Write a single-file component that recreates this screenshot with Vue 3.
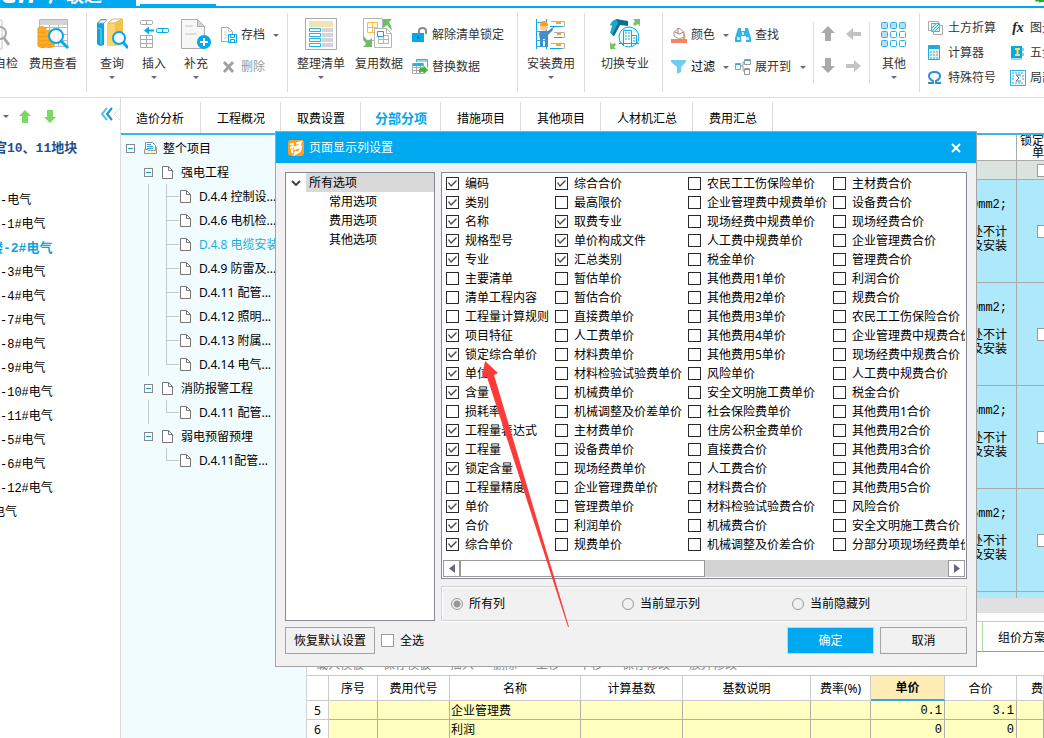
<script setup>
import { ref, reactive } from 'vue'

const tabs = ['造价分析', '工程概况', '取费设置', '分部分项', '措施项目', '其他项目', '人材机汇总', '费用汇总']
const activeTab = ref('分部分项')

const units = [
  '-电气', '-1#电气', '楼-2#电气', '-3#电气', '-4#电气', '-7#电气', '-8#电气', '-9#电气',
  '-10#电气', '-11#电气', '-5#电气', '-6#电气', '-12#电气', '电气',
]
const activeUnit = '楼-2#电气'

const tree = [
  {
    name: '强电工程',
    items: ['D.4.4 控制设...', 'D.4.6 电机检...', 'D.4.8 电缆安装', 'D.4.9 防雷及...', 'D.4.11 配管...', 'D.4.12 照明...', 'D.4.13 附属...', 'D.4.14 电气...'],
  },
  { name: '消防报警工程', items: ['D.4.11 配管...'] },
  { name: '弱电预留预埋', items: ['D.4.11配管...'] },
]
const activeItem = 'D.4.8 电缆安装'

const gridRows = ['0mm2;', '0mm2;', '5mm2;', '5mm2;']

const on = (label) => ({ label, checked: true })
const off = (label) => ({ label, checked: false })
const columns = reactive([
  [
    on('编码'), on('类别'), on('名称'), on('规格型号'), on('专业'), off('主要清单'), off('清单工程内容'),
    off('工程量计算规则'), on('项目特征'), on('锁定综合单价'), on('单位'), on('含量'), off('损耗率'),
    on('工程量表达式'), on('工程量'), on('锁定含量'), off('工程量精度'), on('单价'), on('合价'), on('综合单价'),
  ],
  [
    on('综合合价'), off('最高限价'), on('取费专业'), on('单价构成文件'), on('汇总类别'), off('暂估单价'),
    off('暂估合价'), off('直接费单价'), off('人工费单价'), off('材料费单价'), off('材料检验试验费单价'),
    off('机械费单价'), off('机械调整及价差单价'), off('主材费单价'), off('设备费单价'), off('现场经费单价'),
    off('企业管理费单价'), off('管理费单价'), off('利润单价'), off('规费单价'),
  ],
  [
    off('农民工工伤保险单价'), off('企业管理费中规费单价'), off('现场经费中规费单价'), off('人工费中规费单价'),
    off('税金单价'), off('其他费用1单价'), off('其他费用2单价'), off('其他费用3单价'), off('其他费用4单价'),
    off('其他费用5单价'), off('风险单价'), off('安全文明施工费单价'), off('社会保险费单价'), off('住房公积金费单价'),
    off('直接费合价'), off('人工费合价'), off('材料费合价'), off('材料检验试验费合价'), off('机械费合价'),
    off('机械调整及价差合价'),
  ],
  [
    off('主材费合价'), off('设备费合价'), off('现场经费合价'), off('企业管理费合价'), off('管理费合价'),
    off('利润合价'), off('规费合价'), off('农民工工伤保险合价'), off('企业管理费中规费合价'),
    off('现场经费中规费合价'), off('人工费中规费合价'), off('税金合价'), off('其他费用1合价'), off('其他费用2合价'),
    off('其他费用3合价'), off('其他费用4合价'), off('其他费用5合价'), off('风险合价'), off('安全文明施工费合价'),
    off('分部分项现场经费单价'),
  ],
])
const scope = ref('所有列')
const allChecked = ref(false)

const feeActions = ['载入模板', '保存模板', '插入', '删除', '上移', '下移', '保存修改', '放弃修改']
const feeRows = [
  { no: 5, name: '企业管理费', price: '0.1', total: '3.1' },
  { no: 6, name: '利润', price: '0', total: '0' },
]
</script>

<template>
  <div class="app">
    <header class="titlebar">
      <div class="brand"><i>GH</i><span>广联达</span></div>
      <div class="title-rest"><span class="title-tab"></span>
        <svg width="9" height="3" viewBox="0 0 9 3"><path d="M0 0h9v2H6L5 3 3 1 1 2z" fill="#1faf2d" /></svg>
      </div>
    </header>

    <nav class="ribbon">
      <div class="group g-check">
        <button class="big narrow">
          <svg width="32" height="32" viewBox="0 0 32 32" fill="none"><path d="M2 2h10v29H2" stroke="#c4c4c4" /><circle cx="10" cy="15" r="6" stroke="#a8a8a8" stroke-width="2" /><path d="M14 20l5 7" stroke="#a8a8a8" stroke-width="3" /></svg>
          <span>自检</span>
        </button>
        <button class="big">
          <svg width="32" height="32" viewBox="0 0 32 32" fill="none">
            <path d="M2.500 1.500h28v27h-28zM2.500 9.500h28M2.500 16.500h28M2.500 22.500h28M12.500 7v21M21.500 7v21" stroke="#b9b9b9" />
            <path d="M3 2h27v5H3z" fill="#d4d4d4" />
            <path d="M1 10q4-3 8 0v3q5-2 8 1v14q-4 3-8 1-4 2-8-1z" fill="#ffac2b" stroke="#f19a14" />
            <path d="M1 14q4 2 8 0M1 18q4 2 8 0M1 22q4 2 8 0M1 26q4 2 8 0M9 18q4 2 8 0M9 22q4 2 8 0M9 26q4 2 8 0" stroke="#f19a14" />
            <circle cx="19" cy="18" r="7" fill="#fff" fill-opacity=".85" stroke="#05a7ed" stroke-width="2" />
            <path d="M24 23l7 7" stroke="#05a7ed" stroke-width="3" />
          </svg>
          <span>费用查看</span>
        </button>
      </div>

      <div class="group g-edit">
        <button class="big short">
          <svg width="32" height="32" viewBox="0 0 32 32" fill="none">
            <path d="M1 5l4-4h6L8 4v23l-4 1-3-2z" fill="#0aa6dc" /><path d="M5 2h6L8 5H2z" fill="#fff" stroke="#8bb" />
            <path d="M2 10l3 1v15" stroke="#7fd6f2" />
            <path d="M11 5l5-4h11v22l-8 5h-8z" fill="#fcd46b" /><path d="M12 5l5-4h9l-7 4z" fill="#fff" stroke="#d9b55a" /><path d="M19 5l8-4v23l-8 4z" fill="#f4c14a" />
            <circle cx="23" cy="20" r="6" fill="#fff" stroke="#05a7ed" stroke-width="2" /><path d="M27 24l5 6" stroke="#05a7ed" stroke-width="3" />
          </svg>
          <span>查询</span><b class="caret"></b>
        </button>
        <button class="big short">
          <svg width="32" height="32" viewBox="0 0 32 32" fill="none">
            <rect x="2.500" y="2.500" width="12" height="4" rx="1" stroke="#aaa" /><path d="M8.500 2v5" stroke="#aaa" />
            <path d="M2.500 17.500h12v12h-12zM8.500 17v12M2.500 21.500h12M2.500 25.500h12" stroke="#aaa" />
            <path d="M6 12.500l5-4v3h5v2h-5v3z" fill="#05a7ed" />
            <rect x="18.500" y="10.500" width="12" height="4" rx="1" stroke="#05a7ed" /><path d="M24.500 10v5" stroke="#05a7ed" />
          </svg>
          <span>插入</span><b class="caret"></b>
        </button>
        <button class="big short">
          <svg width="32" height="32" viewBox="0 0 32 32" fill="none">
            <path d="M1.500 1.500h16l7 7v22h-23z" fill="#f7f7f7" stroke="#ababab" /><path d="M17.500 1.500v7h7z" fill="#d8d8d8" stroke="#ababab" />
            <path d="M5 8h8M5 16h12" stroke="#ddd" stroke-width="2" />
            <circle cx="24" cy="24" r="7" fill="#05a7ed" /><path d="M20 24h8M24 20v8" stroke="#fff" stroke-width="2" />
          </svg>
          <span>补充</span><b class="caret"></b>
        </button>
        <div class="stack">
          <button class="small">
            <svg width="16" height="16" viewBox="0 0 16 16" fill="none"><path d="M7 14.500H.5v-14h7l4 4v3" stroke="#aaa" /><path d="M7.500.5v4h4M3 5h3M3 8h3M3 11h3" stroke="#ccc" /><path d="M7.500 7.500h8v8h-8zM9.500 7.500v3h4v-3M9.500 15.500v-3h4v3" stroke="#05a7ed" /></svg>
            <span>存档</span><b class="caret"></b>
          </button>
          <button class="small dim">
            <svg width="16" height="16" viewBox="0 0 16 16"><path d="M3 3l9 10M12 3L3 13" stroke="#a2a2a2" stroke-width="3" /></svg>
            <span>删除</span>
          </button>
        </div>
      </div>

      <div class="group g-list">
        <button class="big wide">
          <svg width="32" height="32" viewBox="0 0 32 32" fill="none"><path d="M.5.5h31v31H.5z" stroke="#aaa" /><path d="M4 3h24v6H4z" fill="#f4e2b2" /><path d="M17 10h11v4H17zM17 15h11v4H17zM17 20h11v4H17zM17 25h11v4H17z" fill="#d5d4da" /><path d="M4.500 10.500h11v3h-11zM4.500 15.500h11v3h-11zM4.500 20.500h11v3h-11zM4.500 25.500h11v3h-11z" stroke="#23b2ea" /></svg>
          <span>整理清单</span><b class="caret"></b>
        </button>
        <button class="big wide reuse">
          <svg width="32" height="32" viewBox="0 0 32 32" fill="none"><path d="M.5.5h19v22H.5z" stroke="#b5b5b5" /><path d="M4.500 4.500h10v10h-10zM4.500 9.500h10M9.500 4v10" stroke="#ffbd3a" /><path d="M11.500 10.500h12l5 5v14h-17z" fill="#fff" stroke="#b5b5b5" /><path d="M23.500 10.500v5h5" stroke="#b5b5b5" /><path d="M15.500 17.500h10v8h-10zM20.500 17v8M15.500 21.500h10" stroke="#b5b5b5" /><path d="M14.500 13.500h6v5h-6z" fill="#fff" stroke="#05a7ed" /><path d="M20 1h9l-3 3q3 4 3 9-3-4-5-6l-4 3zM9 29H0l3-3q-3-4-3-9 3 4 5 6l4-3z" fill="#6fbf62" /></svg>
          <span>复用数据</span>
        </button>
        <div class="stack">
          <button class="small">
            <svg width="16" height="16" viewBox="0 0 16 16" fill="none"><path d="M7 6V4q0-3 3.500-3T14 4v3" stroke="#8a8a8a" stroke-width="2" /><path d="M0 6h12v9H0z" fill="#05a7ed" /><path d="M5 9h2v3H5z" fill="#0878ad" /></svg>
            <span>解除清单锁定</span>
          </button>
          <button class="small">
            <svg width="16" height="16" viewBox="0 0 16 16" fill="none"><path d="M4.500 3V.5h11v8" stroke="#23b2ea" /><path d="M5 1h10v2H5z" fill="#8bdaf6" /><path d="M.5 4.500h11v10H.5zM.5 8.500h11M.5 11.500h11M4.500 7v7M8.500 7v7" stroke="#aaa" /><path d="M1 4h10v3H1z" fill="#23b2ea" /><path d="M7 11q1-3 5-2V7l4 4-4 4v-2q-3-1-5 1z" fill="#3db83a" /></svg>
            <span>替换数据</span>
          </button>
        </div>
      </div>

      <div class="group g-install">
        <button class="big wide">
          <svg width="32" height="32" viewBox="0 0 32 32" fill="none"><path d="M1.500 1v30M11.500 1v30" stroke="#05a7ed" /><path d="M1 4.500h10M1 13.500h10M1 22.500h10M1 28.500h10" stroke="#23b2ea" /><path d="M16 3.500h13.500v5H27M19 14.500h10.500v5H27M16 25.500h13.500v5H27" stroke="#b0b0b0" /><path d="M15 8.500h12M19 19.500h8M15 30.500h12" stroke="#05a7ed" /><path d="M21 5h5M22 16h4M21 27h5" stroke="#ffa31f" stroke-width="2" /><circle cx="9" cy="9" r="4" fill="#f8c99a" /><path d="M5 8q0-5 4-5t4 5z" fill="#ff9b16" /><path d="M5 13h8l4-3 1 2-5 5v12h-3v-8H8v8H5v-7l-1-6z" fill="#428dcb" /><path d="M13 14l6-5" stroke="#7e746a" /></svg>
          <span>安装费用</span><b class="caret"></b>
        </button>
      </div>

      <div class="group g-major">
        <button class="big wide">
          <svg width="32" height="32" viewBox="0 0 32 32" fill="none"><path d="M1 7q2-6 8-6l3 4-7 13-4-3 2-7z" fill="#1fa8cf" /><path d="M7 1l12 2v5l-8-1-6 11-2-1 6-12z" fill="#0a6f91" /><circle cx="20" cy="19" r="10" fill="#e9f9ff" stroke="#10abe4" /><path d="M14.500 28V12.500h8V28M22.500 17.500h5V26M10 25.500h20" fill="#fff" stroke="#10abe4" /><path d="M16 15h2M19 15h2M16 18h2M19 18h2M16 21h2M19 21h2M24 20h2M24 23h2" stroke="#10abe4" /><path d="M24 1h7v7l-2-2-3 2-2-2 2-3zM1 24l2 2 3-1 1 2-2 2 2 2H1z" fill="#77c26b" /></svg>
          <span>切换专业</span>
        </button>
      </div>

      <div class="group g-find">
        <div class="stack">
          <button class="small">
            <svg width="16" height="16" viewBox="0 0 16 16" fill="none"><path d="M3 5l5-4 5 4v5l-5 2-5-3z" fill="#fff" stroke="#999" /><path d="M4 5l4 2 5-2M7 1v5" stroke="#b87858" /><path d="M12 5q3 2 2 7h-2z" fill="#f39a67" /><path d="M0 12h16v4H0z" fill="#f7855b" /></svg>
            <span>颜色</span><b class="caret"></b>
          </button>
          <button class="small dark">
            <svg width="16" height="16" viewBox="0 0 16 16"><path d="M0 1h15v2l-5 5v5l-4 2V8L0 3z" fill="#6fcdf3" /></svg>
            <span>过滤</span><b class="caret"></b>
          </button>
        </div>
        <div class="stack">
          <button class="small">
            <svg width="16" height="16" viewBox="0 0 16 16"><path d="M3 1h3v3h4V1h3l3 10v4h-5V9H6v6H0v-4z" fill="#35b4e4" /><path d="M2 10h3v3H2zM11 10h3v3h-3zM7 5h2v3H7z" fill="#bfe9f8" /></svg>
            <span>查找</span>
          </button>
          <button class="small">
            <svg width="16" height="16" viewBox="0 0 16 16" fill="none"><path d="M6 7h2M8 3v9M8 3h2M8 12h2" stroke="#999" /><path d="M.5 4.500h5v6h-5zM9.500.5h6v5h-6zM9.500 9.500h5v6h-5z" fill="#fff" stroke="#999" /><path d="M1 5h4v1H1zM10 1h5v1h-5zM10 10h4v1h-4z" fill="#23b2ea" /></svg>
            <span>展开到</span><b class="caret"></b>
          </button>
        </div>
      </div>

      <div class="group g-move">
        <button class="arrow" aria-label="上"><svg width="16" height="16" viewBox="0 0 16 16"><path d="M7 0l7 7h-4v8H4V7H0z" fill="#a9a9a9" /></svg></button>
        <button class="arrow" aria-label="左"><svg width="16" height="16" viewBox="0 0 16 16"><path d="M0 8l7-6v4h8v4H7v4z" fill="#c3c3c3" /></svg></button>
        <button class="arrow" aria-label="下"><svg width="16" height="16" viewBox="0 0 16 16"><path d="M7 15l7-7h-4V0H4v8H0z" fill="#a9a9a9" /></svg></button>
        <button class="arrow" aria-label="右"><svg width="16" height="16" viewBox="0 0 16 16"><path d="M15 8L8 2v4H0v4h8v4z" fill="#c3c3c3" /></svg></button>
      </div>

      <div class="group g-other">
        <button class="big short">
          <svg width="32" height="32" viewBox="0 0 32 32" fill="#fff" stroke="#23b2ea"><g fill="#bcdcf2"><rect x="3.500" y="4.500" width="6" height="6" rx="1" /><rect x="12.500" y="4.500" width="6" height="6" rx="1" /><rect x="21.500" y="4.500" width="6" height="6" rx="1" /><rect x="3.500" y="13.500" width="6" height="6" rx="1" /><rect x="3.500" y="22.500" width="6" height="6" rx="1" /></g><rect x="12.500" y="13.500" width="6" height="6" rx="1" /><rect x="21.500" y="13.500" width="6" height="6" rx="1" /><rect x="12.500" y="22.500" width="6" height="6" rx="1" /><rect x="21.500" y="22.500" width="6" height="6" rx="1" /></svg>
          <span>其他</span><b class="caret"></b>
        </button>
      </div>

      <div class="group g-tools">
        <div class="stack tight">
          <button class="small"><svg width="16" height="16" viewBox="0 0 16 16" fill="none"><path d="M.5 1.500h10v9H.5zM5.500 5.500h9v9h-9z" stroke="#aaa" /><path d="M3.500 3.500h8v8h-8z" fill="#d5f1fb" stroke="#999" /><path d="M4 11l7-7M4 8l4-4M7 11l4-4" stroke="#23b2ea" /></svg><span>土方折算</span></button>
          <button class="small"><svg width="16" height="16" viewBox="0 0 16 16" fill="none"><path d="M.5.5h11v14H.5z" fill="#e4f6fc" stroke="#23a9df" /><path d="M1 1h10v3H1z" fill="#23a9df" /><path d="M2 7h2M5 7h2M2 10h2M5 10h2M2 13h2M5 13h2M8 13h2" stroke="#23a9df" /><path d="M8 7h2M8 10h2" stroke="#f05a3c" /></svg><span>计算器</span></button>
          <button class="small"><svg width="16" height="16" viewBox="0 0 16 16" fill="none"><path d="M0 13h5v-2Q1 9 1 6q0-4 5.500-4T12 6q0 3-4 5v2h5" stroke="#2f8fd0" stroke-width="2" /></svg><span>特殊符号</span></button>
        </div>
        <div class="stack tight">
          <button class="small"><em class="fx">fx</em><span>图元</span></button>
          <button class="small"><svg width="16" height="16" viewBox="0 0 16 16" fill="none"><path d="M1 1h11v13H1z" fill="#05a7ed" /><path d="M1 14h11" stroke="#9adcf5" stroke-width="2" /><path d="M5 4h5M5 10h5M7.500 4v6" stroke="#ffe23b" stroke-width="2" /><path d="M13 3v3M13 8v3" stroke="#05a7ed" /></svg><span>五金</span></button>
          <button class="small"><svg width="16" height="16" viewBox="0 0 16 16" fill="none"><path d="M.5.5h15v15H.5z" fill="#f2fbff" stroke="#23b2ea" /><path d="M2 3h12M2 6h3M12 6h2M2 9h3M12 9h2M2 13h12" stroke="#23b2ea" stroke-dasharray="2 1" /><path d="M11 5H6l3 3-3 3h5" stroke="#777" /></svg><span>局部</span></button>
        </div>
      </div>
    </nav>

    <div class="workspace">
      <aside class="units">
        <div class="units-bar">
          <b class="caret"></b>
          <svg width="12" height="13" viewBox="0 0 12 13"><path d="M6 0l6 6H9v7H3V6H0z" fill="#7cd864" /></svg>
          <svg width="12" height="13" viewBox="0 0 12 13"><path d="M6 13l6-6H9V0H3v7H0z" fill="#7cd864" /></svg>
          <svg class="collapse" width="21" height="16" viewBox="0 0 21 16" fill="none"><path d="M8 1L3 7l5 6" stroke="#5cc0e4" stroke-width="2" /><path d="M13 1L8 7l5 6" stroke="#1495cc" stroke-width="2" /><path d="M21 1l-6 6 6 6" stroke="#ddd" /></svg>
        </div>
        <h1 class="units-title">官10、11地块</h1>
        <ul class="units-list">
          <li v-for="u in units" :key="u" :class="{ active: u === activeUnit, cut: u === '电气' }">{{ u }}</li>
        </ul>
      </aside>

      <section class="main">
        <div class="tabs" role="tablist">
          <button v-for="t in tabs" :key="t" role="tab" class="tab" :class="{ active: t === activeTab }" @click="activeTab = t">{{ t }}</button>
        </div>

        <div class="content">
          <div class="tree">
            <div class="node root">
              <i class="toggle"></i>
              <svg width="14" height="14" viewBox="0 0 14 14" fill="none"><path d="M1.500 10V1.500h7l3 3V10" fill="#fff" stroke="#888" /><path d="M3 3.500h4M3 5.500h6M3 7.500h6" stroke="#2aa8d8" /><path d="M.5 8.500h3l1 1h7V6.500h1v6H.5z" fill="#fdf3c4" stroke="#999" /></svg>
              <span>整个项目</span>
            </div>
            <template v-for="(g, gi) in tree" :key="g.name">
              <div class="node branch">
                <i class="toggle"></i>
                <svg width="11" height="13" viewBox="0 0 11 13" fill="none"><path d="M.5.5h6l4 4v8H.5z" fill="#fff" stroke="#777" /><path d="M6.500.5v4h4" stroke="#777" /></svg>
                <span>{{ g.name }}</span>
              </div>
              <div v-for="(it, i) in g.items" :key="g.name + it" class="node leaf" :class="{ active: it === activeItem }">
                <i class="rail" :class="{ none: gi === tree.length - 1 }"></i>
                <i class="elbow" :class="{ end: i === g.items.length - 1 }"></i>
                <svg width="11" height="13" viewBox="0 0 11 13" fill="none"><path d="M.5.5h6l4 4v8H.5z" fill="#fff" stroke="#777" /><path d="M6.500.5v4h4" stroke="#777" /></svg>
                <span>{{ it }}</span>
              </div>
            </template>
          </div>

          <div class="sheets">
            <div class="grid-wrap">
              <table class="grid">
                <colgroup><col><col class="lock-col"></colgroup>
                <thead><tr><th></th><th>锁定<br>单</th></tr></thead>
                <tbody>
                  <tr class="total"><td></td><td><input type="checkbox" aria-label="锁定"></td></tr>
                  <tr v-for="(r, i) in gridRows" :key="i">
                    <td>{{ r }}<br><br>处不计<br>及安装</td>
                    <td><input type="checkbox" aria-label="锁定"></td>
                  </tr>
                  <tr><td></td><td></td></tr>
                </tbody>
              </table>
            </div>
            <div class="grid-scroll"></div>
            <div class="subtabs"><button>组价方案</button></div>
            <div class="fee-actions"><span v-for="a in feeActions" :key="a">{{ a }}</span></div>
            <table class="fees">
              <colgroup>
                <col class="c-no"><col class="c-seq"><col class="c-code"><col class="c-name"><col class="c-base">
                <col class="c-desc"><col class="c-rate"><col class="c-price"><col class="c-total"><col>
              </colgroup>
              <thead>
                <tr><th></th><th>序号</th><th>费用代号</th><th>名称</th><th>计算基数</th><th>基数说明</th><th>费率(%)</th><th class="current">单价</th><th>合价</th><th class="last">费</th></tr>
              </thead>
              <tbody>
                <tr v-for="r in feeRows" :key="r.no">
                  <th>{{ r.no }}</th><td></td><td></td><td>{{ r.name }}</td><td></td><td></td><td></td>
                  <td class="num">{{ r.price }}</td><td class="num">{{ r.total }}</td><td></td>
                </tr>
              </tbody>
            </table>
          </div>
        </div>
      </section>
    </div>

    <div class="dialog" role="dialog" aria-labelledby="dlg-title">
      <div class="dlg-head">
        <svg width="16" height="16" viewBox="0 0 16 16" fill="none"><rect width="16" height="16" rx="3" fill="#ff9d1e" /><path d="M2 4.500l4-1M8 3.500l5-1.500-1 3-6 3M2 8l4-2M5 13q-2-2 0-4M6 9l7-2-1 4-5 3 1-3" stroke="#fff" stroke-width="2" /></svg>
        <h2 id="dlg-title">页面显示列设置</h2>
        <button class="close" aria-label="关闭"><svg width="12" height="10" viewBox="0 0 12 10"><path d="M2 1l8 8M10 1L2 9" stroke="#fff" stroke-width="2" /></svg></button>
      </div>
      <div class="dlg-body">
        <ul class="options">
          <li class="parent"><svg width="10" height="6" viewBox="0 0 10 6" fill="none"><path d="M1 1l4 4 4-4" stroke="#444" stroke-width="2" /></svg><span>所有选项</span></li>
          <li>常用选项</li>
          <li>费用选项</li>
          <li>其他选项</li>
        </ul>
        <div class="dlg-right">
          <div class="fields">
            <div class="field-cols">
              <div v-for="(col, ci) in columns" :key="ci" class="field-col">
                <label v-for="f in col" :key="f.label"><input v-model="f.checked" type="checkbox"><span>{{ f.label }}</span></label>
              </div>
            </div>
            <div class="hscroll">
              <button aria-label="向左滚动"><svg width="6" height="9" viewBox="0 0 6 9"><path d="M6 0v9L0 4.500z" fill="#666878" /></svg></button>
              <span class="thumb"></span><span class="track"></span>
              <button aria-label="向右滚动"><svg width="6" height="9" viewBox="0 0 6 9"><path d="M0 0v9l6-4.500z" fill="#666878" /></svg></button>
            </div>
          </div>
          <div class="scope" role="radiogroup">
            <label v-for="s in ['所有列', '当前显示列', '当前隐藏列']" :key="s"><input v-model="scope" type="radio" name="scope" :value="s"><span>{{ s }}</span></label>
          </div>
        </div>
      </div>
      <div class="dlg-foot">
        <button class="btn reset">恢复默认设置</button>
        <label class="all"><input v-model="allChecked" type="checkbox"><span>全选</span></label>
        <button class="btn primary">确定</button>
        <button class="btn">取消</button>
      </div>
      <svg class="pointer" width="90" height="270" viewBox="0 0 90 270"><path d="M4 1l13 12-4 2 75 252h-1L6 17l-5 1z" fill="#fb3a3a" /></svg>
    </div>
  </div>
</template>

<style>
html, body { margin: 0; overflow: hidden; }
</style>

<style scoped>
.app, .app * { box-sizing: border-box; }
.app {
  position: relative; display: flex; flex-direction: column; height: 100vh; overflow: hidden;
  background: #fff; color: #000; font: 12px/16px "Noto Sans", "Noto Sans CJK SC", sans-serif; white-space: nowrap;
}
button { padding: 0; border: 0; background: none; font: inherit; color: inherit; cursor: pointer; }
ul { margin: 0; padding: 0; list-style: none; }
svg { display: block; flex: none; }
.caret { width: 0; height: 0; border: 3px solid transparent; border-top-color: #666878; border-bottom: 0; }

.titlebar { flex: none; display: flex; height: 8px; }
.brand {
  width: 136px; display: flex; align-items: flex-end; gap: 6px; padding-bottom: 4px; overflow: hidden;
  background: #00a8f0; color: #fff; font-size: 18px; line-height: 18px; font-weight: 700;
}
.brand i { font-size: 26px; line-height: 22px; width: 42px; }
.title-rest { flex: 1; display: flex; justify-content: space-between; border-bottom: 2px solid #00a8f0; }
.title-tab { width: 76px; height: 2px; margin: 4px 0 0 4px; background: #00a8f0; }

.ribbon { flex: none; display: flex; height: 90px; border-bottom: 1px solid #dcdcdc; color: #333; overflow: hidden; }
.group { position: relative; flex: none; display: flex; height: 84px; padding-top: 10px; }
.group::after { content: ""; position: absolute; right: 0; top: 5px; bottom: 0; width: 1px; background: #dcdcdc; }
.g-check { width: 93px; margin-left: -6px; gap: 11px; }
.g-edit { width: 201px; padding-left: 4px; }
.g-list { width: 230px; padding-left: 4px; }
.g-install { width: 67px; padding-left: 4px; }
.g-major { width: 78px; padding-left: 11px; }
.g-find { width: 151px; padding-left: 8px; gap: 6px; }
.g-move { width: 56px; display: grid; grid-template-columns: 25px 25px; grid-auto-rows: 32px; padding-left: 2px; }
.g-other { width: 50px; padding-left: 3px; }
.g-tools { flex: 1; padding-left: 8px; gap: 14px; }
.g-tools::after { display: none; }
.g-move::after, .g-find::after { top: 14px; bottom: 9px; }
.big { width: 48px; display: flex; flex-direction: column; align-items: center; height: 64px; }
.big span { margin-top: 6px; }
.big .caret { margin-top: 4px; }
.narrow { width: 24px; }
.short { width: 42px; }
.wide { width: 58px; }
.stack { display: flex; flex-direction: column; padding: 1px 0 0 4px; }
.g-find .stack, .g-tools .stack { padding-left: 0; }
.small { display: flex; align-items: center; height: 32px; gap: 4px; }
.small .caret { margin-left: 4px; }
.g-find .stack:last-child .caret { margin-left: 5px; }
.dim { color: #999; }
.dark { color: #000; }
.tight { margin-top: -4px; }
.tight .small { height: 25px; }
.fx { width: 16px; font: italic 700 14px/16px "Liberation Serif", serif; color: #222; }
.arrow { display: flex; align-items: center; justify-content: center; }

.workspace { flex: 1; display: flex; min-height: 0; }
.units { flex: none; width: 121px; border-right: 1px solid #dcdcdc; overflow: hidden; font-family: "Liberation Mono", "Noto Sans CJK SC", monospace; }
.units-bar { display: flex; align-items: center; gap: 13px; height: 37px; padding-left: 3px; }
.units-bar .caret { margin-right: -3px; }
.collapse { align-self: flex-start; margin: 9px 0 0 auto; }
.units-title { margin: 2px 0 28px -6px; font-size: 13px; line-height: 24px; color: #1c4f8c; }
.units-list li { height: 24px; line-height: 24px; }
.units-list .active { margin-left: -10px; font-size: 13px; font-weight: 700; color: #14a3d8; }
.units-list .cut { margin-left: -7px; }

.main { flex: 1; display: flex; flex-direction: column; min-width: 0; margin-bottom: -1px; }
.tabs { flex: none; display: flex; height: 37px; padding-top: 4px; border-bottom: 2px solid #41b4e6; }
.tab { padding: 2px 15px 0 16px; border-right: 1px solid #dcdcdc; height: 31px; }
.tab:first-child { padding: 2px 16px 0 15px; }
.tab.active { color: #00a8f0; font-weight: 700; font-size: 13px; padding: 1px 13px 0 14px; }

.content { flex: 1; display: flex; min-height: 0; }
.tree { flex: none; width: 185px; padding-top: 1px; background: #f0fcff; overflow: hidden; }
.node { display: flex; align-items: center; height: 24px; }
.node span { padding-top: 1px; }
.toggle { flex: none; width: 9px; height: 9px; border: 1px solid #888; background: linear-gradient(#1aa0d8, #1aa0d8) center / 5px 1px no-repeat #fff; }
.root { padding-left: 5px; }
.root svg { margin: 0 5px 0 9px; }
.branch { padding-left: 23px; }
.branch svg { margin: 0 8px 0 9px; }
.leaf svg { margin: 0 8px 0 1px; }
.leaf.active { color: #1cb0e0; }
.rail { flex: none; width: 18px; height: 24px; margin-left: 27px; border-left: 1px solid #c4c8ca; }
.rail.none { border-color: transparent; }
.elbow {
  flex: none; width: 13px; height: 24px;
  background: linear-gradient(#c4c8ca, #c4c8ca) 0 0 / 1px 100% no-repeat, linear-gradient(#c4c8ca, #c4c8ca) 0 12px / 13px 1px no-repeat;
}
.elbow.end { background-size: 1px 12px, 13px 1px; }

.sheets { flex: 1; display: flex; flex-direction: column; min-width: 0; border-left: 1px solid #d4d4d4; }
.grid-wrap { flex: 1; min-height: 0; overflow: hidden; }
.grid { width: 100%; table-layout: fixed; border-collapse: separate; border-spacing: 0; line-height: 14px; }
.lock-col { width: 27px; }
.grid th, .grid td { padding: 0; border-bottom: 1px solid #ababab; text-align: right; font-weight: 400; overflow: hidden; }
.grid th:first-child, .grid td:first-child { border-right: 1px solid #ababab; }
.grid th { height: 26px; vertical-align: top; line-height: 12px; }
.grid td { height: 103px; padding-bottom: 10px; background: #aee8fb; font-family: "Liberation Mono", "Noto Sans CJK SC", monospace; }
.grid td:first-child { padding-right: 9px; }
.grid td:last-child { padding-bottom: 0; }
.grid .total td { height: 19px; padding-bottom: 0; background: #dbe3de; }
.grid-scroll { flex: none; height: 15px; margin-bottom: 8px; background: #e0e0e0; }
.subtabs { flex: none; display: flex; justify-content: flex-end; height: 31px; border-top: 1px solid #aedd9f; border-bottom: 1px solid #6fb96f; }
.subtabs button { width: 62px; padding: 2px 0 0 15px; border-left: 1px solid #aedd9f; text-align: left; overflow: hidden; }
.fee-actions { flex: none; display: flex; gap: 19px; height: 23px; padding: 5px 0 0 9px; color: #888; }
.fees { flex: none; width: 100%; table-layout: fixed; border-collapse: separate; border-spacing: 0; border-top: 1px solid #ccc; }
.c-no { width: 22px; }
.c-seq { width: 49px; }
.c-code { width: 72px; }
.c-name { width: 131px; }
.c-base { width: 102px; }
.c-desc { width: 128px; }
.c-rate { width: 60px; }
.c-price { width: 74px; }
.c-total { width: 72px; }
.fees th, .fees td { height: 19px; padding: 1px 0 0; border-right: 1px solid #b0b0b0; border-bottom: 1px solid #b0b0b0; font-weight: 400; overflow: hidden; }
.fees thead th { height: 25px; border-color: #ccc; }
.fees thead .current { background: #ffedb5; font-weight: 700; border-bottom: 2px solid #38a8dc; }
.fees .last { text-align: right; }
.fees tbody th { background: #fff; border-color: #ccc; }
.fees td { padding: 1px 2px 0 1px; background: #ffffc0; }
.fees .num { text-align: right; font-family: "Liberation Mono", monospace; }

input[type="checkbox"] { flex: none; appearance: none; width: 13px; height: 13px; margin: 0; border: 1px solid #2a2a2a; background: #fff; }
input[type="checkbox"]:checked::before {
  content: ""; display: block; width: 11px; height: 11px; background: #4a4a4a;
  clip-path: polygon(1px 5px, 2px 4px, 4px 7px, 9px 2px, 10px 3px, 4px 9px);
}
.grid input[type="checkbox"], .all input[type="checkbox"] { border-color: #999; }
.grid input[type="checkbox"] { display: block; margin: 0 0 0 20px; }
input[type="radio"] { flex: none; appearance: none; width: 12px; height: 12px; margin: 0; border: 1px solid #999; border-radius: 50%; background: #f1f1f1; }
input[type="radio"]:checked { background: radial-gradient(#999 3px, #f1f1f1 4px); }

.dialog { position: absolute; left: 275px; right: 67px; top: 131px; border: 1px solid #a4a4a4; background: #f1f1f1; }
.dlg-head { display: flex; align-items: center; gap: 5px; height: 31px; padding: 0 14px 0 12px; background: #00a8f0; color: #fff; }
.dlg-head h2 { flex: 1; margin: 0; font-size: 12px; font-weight: 400; }
.dlg-body { display: grid; grid-template-columns: 150px minmax(0, 1fr); gap: 6px; padding: 9px 9px 6px; }
.options { border: 1px solid #858a96; background: #fff; }
.options li { height: 19px; line-height: 19px; padding-left: 43px; }
.options .parent { display: flex; align-items: center; gap: 5px; padding-left: 5px; }
.options .parent span { flex: 1; padding-left: 3px; background: #d9d9d9; }
.dlg-right { display: flex; flex-direction: column; gap: 7px; min-width: 0; }
.fields { padding: 1px; border: 1px solid #858a96; background: #fff; }
.field-cols { display: grid; grid-template-columns: 109px 133px 145px minmax(0, 1fr); padding-left: 3px; margin-bottom: 6px; overflow: hidden; }
.field-col label { display: flex; align-items: center; gap: 6px; height: 19px; }
.hscroll { display: flex; height: 17px; background: #d3d3d3; }
.hscroll button { flex: none; display: flex; align-items: center; justify-content: center; width: 17px; border: 1px solid #999; background: #fff; }
.thumb { flex: 244; border: 1px solid #999; background: #fff; }
.track { flex: 244; }
.scope { display: grid; grid-template-columns: 171px 170px 1fr; align-items: center; height: 35px; padding-left: 9px; border: 1px solid #d2d2d2; box-shadow: inset 1px 1px #fff, 0 1px #fff; }
.scope label, .all { display: flex; align-items: center; gap: 6px; }
.dlg-foot { display: flex; gap: 6px; height: 39px; padding: 0 9px 12px; }
.btn { width: 87px; border: 1px solid #a4a4a4; }
.reset { width: 90px; }
.all { flex: 1; }
.primary { background: #00a8f0; color: #fff; border-color: #c4d4dc; }
.pointer { position: absolute; left: 205px; top: 228px; pointer-events: none; }
</style>
